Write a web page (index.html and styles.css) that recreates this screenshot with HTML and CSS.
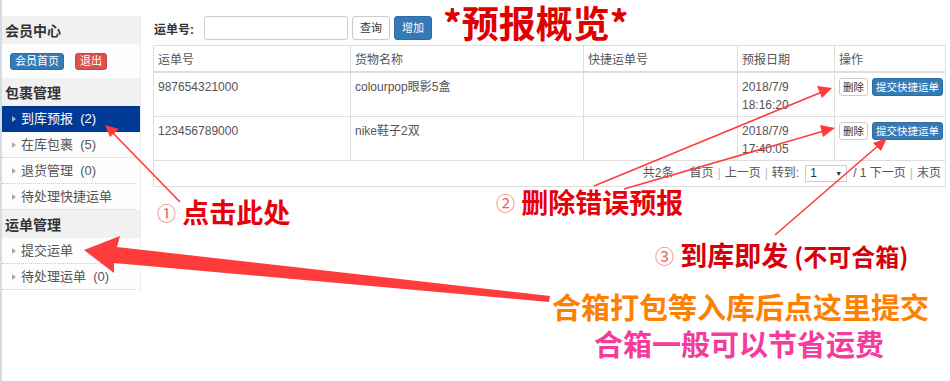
FILE: index.html
```html
<html lang="zh-CN">
<head>
  <meta charset="UTF-8" />
  <title>预报概览</title>
  <meta content="width=device-width, initial-scale=1" name="viewport" />
  <link rel="stylesheet" href="styles.css">
</head>
<body>

<div class="page">
  <div class="sidebar">
    <div class="side_title">会员中心</div>
    <div class="side_btns">
      <span class="btn btn_blue btn_xs">会员首页</span>
      <span class="btn btn_red btn_xs">退出</span>
    </div>
    <div class="side_title">包裹管理</div>
    <div class="side_item active">到库预报&nbsp; (2)</div>
    <div class="side_item">在库包裹&nbsp; (5)</div>
    <div class="side_item">退货管理&nbsp; (0)</div>
    <div class="side_item">待处理快捷运单</div>
    <div class="side_title">运单管理</div>
    <div class="side_item">提交运单</div>
    <div class="side_item">待处理运单&nbsp; (0)</div>
  </div>

  <div class="main">
    <form class="search_row">
      <label for="waybill">运单号:</label>
      <input type="text" id="waybill" class="search_input">
      <span class="btn btn_white btn_sm">查询</span>
      <span class="btn btn_blue btn_sm">增加</span>
    </form>

    <table class="list">
      <colgroup>
        <col style="width:197px"><col style="width:233px"><col style="width:154px"><col style="width:97px"><col style="width:111px">
      </colgroup>
      <thead>
        <tr><th>运单号</th><th>货物名称</th><th>快捷运单号</th><th>预报日期</th><th>操作</th></tr>
      </thead>
      <tbody>
        <tr>
          <td>987654321000</td><td>colourpop眼影5盒</td><td></td><td>2018/7/9<br>18:16:20</td>
          <td class="ops"><span class="btn btn_white btn_op">删除</span><span class="btn btn_blue btn_op">提交快捷运单</span></td>
        </tr>
        <tr>
          <td>123456789000</td><td>nike鞋子2双</td><td></td><td>2018/7/9<br>17:40:05</td>
          <td class="ops"><span class="btn btn_white btn_op">删除</span><span class="btn btn_blue btn_op">提交快捷运单</span></td>
        </tr>
      </tbody>
      <tfoot>
        <tr><td colspan="5">
          <div class="pager">
            <span>共2条</span>
            <span class="gap">首页</span><span class="sep">|</span><span>上一页</span><span class="sep">|</span><span>转到:</span>
            <span class="pager_select">1 <i>▼</i></span>
            <span>/ 1 下一页</span><span class="sep">|</span><span>末页</span>
          </div>
        </td></tr>
      </tfoot>
    </table>
  </div>
</div>

<!-- annotations drawn over the screenshot -->
<div class="note note_title">*预报概览*</div>
<div class="note note_1"><span class="circ">①</span> 点击此处</div>
<div class="note note_2"><span class="circ">②</span> 删除错误预报</div>
<div class="note note_3"><span class="circ">③</span> 到库即发 <small>(不可合箱)</small></div>
<div class="note note_4">合箱打包等入库后点这里提交</div>
<div class="note note_5">合箱一般可以节省运费</div>

<svg class="arrows" width="950" height="381" viewBox="0 0 950 381">
  <g stroke="#ff3b3b" stroke-width="1.6" fill="#ff3b3b">
    <line x1="178" y1="202" x2="110" y2="132"/>
    <polygon points="103,125 117,129 108,137" stroke="none"/>
    <line x1="592" y1="186" x2="820" y2="92"/>
    <polygon points="830,88 815,86 820,98" stroke="none"/>
    <line x1="622" y1="189" x2="822" y2="131"/>
    <polygon points="833,128 818,125 821,137" stroke="none"/>
    <line x1="773" y1="235" x2="877" y2="145"/>
    <polygon points="885,138 871,143 879,151" stroke="none"/>
  </g>
  <polygon points="82,250 118,236 115,247 548,296 547,302 112,263 112,273" fill="#ff3b3b"/>
</svg>

</body>
</html>
```

FILE: styles.css
```css
*{box-sizing:border-box; margin:0; padding:0;}
body{width:950px; height:381px; background:#fff; border-left:2px solid #d3dbe7;
     font-family:"Liberation Sans","Noto Sans CJK SC",sans-serif; font-size:12px; color:#555;
     position:relative; overflow:hidden;}
.page{display:flex; flex-direction:row;}

.sidebar{width:139px; margin-top:16px; border-right:1px solid #eee; background:#fdfdfd; padding-bottom:3px;}
.side_title{height:28px; line-height:28px; padding-left:3px; background:#f1f1f1;
            font-size:14px; font-weight:bold; color:#333; font-family:"Noto Sans CJK SC",sans-serif;}
.side_btns{display:flex; gap:11px; padding:9px 0 8px 8px;}
.side_item{height:26px; line-height:26px; padding-left:19px; position:relative; font-size:13px;
           color:#555; border-bottom:1px dotted #ccc; margin-right:4px;}
.side_item:before{content:""; position:absolute; left:10px; top:10px; border-left:4px solid #aaa;
           border-top:3px solid transparent; border-bottom:3px solid transparent;}
.side_item.active{background:#003a96; color:#fff; border-bottom:none; margin-right:0;}
.side_item.active:before{border-left-color:#9fb3d8;}

.btn{display:inline-block; border:1px solid #ccc; border-radius:3px; text-align:center; white-space:nowrap;}
.btn_blue{background:#337ab7; border-color:#2e6da4; color:#fff;}
.btn_red{background:#d9534f; border-color:#d43f3a; color:#fff;}
.btn_white{background:#fff; color:#333;}
.btn_xs{font-size:11px; height:17px; line-height:15px; padding:0 4px;}
.btn_sm{font-size:11px; height:24px; line-height:22px; padding:0 7px;}
.btn_op{font-size:10.5px; height:18px; line-height:16px; padding:0 3px;}

.main{margin-left:12px; width:793px; padding-top:16px;}
.search_row{display:flex; align-items:center; gap:4px; height:24px; margin-bottom:5px;}
.search_row label{font-weight:bold; color:#333; font-size:12px; margin-left:1px; width:46px;}
.search_input{width:144px; height:24px; border:1px solid #ccc; border-radius:3px;}

.list{width:793px; border-collapse:collapse; table-layout:fixed; border:1px solid #ddd; font-size:12px;}
.list th{font-weight:normal; text-align:left; padding:4px 4px; height:25px; border:1px solid #ddd; border-bottom:2px solid #ddd;}
.list td{padding:5px 4px 2px; height:43px; line-height:18px; vertical-align:top; border:1px solid #ddd;}
.list td.ops{padding:5px 2px 0 4px; white-space:nowrap;}
.list td.ops .btn{margin-right:4px; vertical-align:top;}
.list tfoot td{height:26px; padding:3px 4px 0; line-height:18px;}
.pager{display:flex; justify-content:flex-end; align-items:center; gap:4px; font-size:12px;}
.pager .gap{margin-left:12px;}
.pager .sep{color:#bbb;}
.pager_select{display:inline-flex; justify-content:space-between; width:42px; height:17px; line-height:15px;
              border:1px solid #ccc; padding:0 4px; margin:0 2px; color:#333;}
.pager_select i{font-style:normal; font-size:7px;}

.note{position:absolute; font-family:"Noto Sans CJK SC",sans-serif; font-weight:bold; white-space:nowrap; line-height:1.2;}
.note .circ{font-weight:normal; color:#f06060; font-size:19px; vertical-align:2px;}
.note_title{left:441px; top:0; font-size:37px; color:#e00000;}
.note_1{left:155px; top:196px; font-size:27px; color:#e8000b;}
.note_2{left:494px; top:186px; font-size:27px; color:#e8000b;}
.note_3{left:653px; top:239px; font-size:27px; color:#d8000b;}
.note_3 small{font-size:24px;}
.note_4{left:550px; top:289px; font-size:29px; color:#ff8000;}
.note_5{left:592px; top:326px; font-size:29px; color:#f53b9c;}
.arrows{position:absolute; left:0; top:0;}
```
